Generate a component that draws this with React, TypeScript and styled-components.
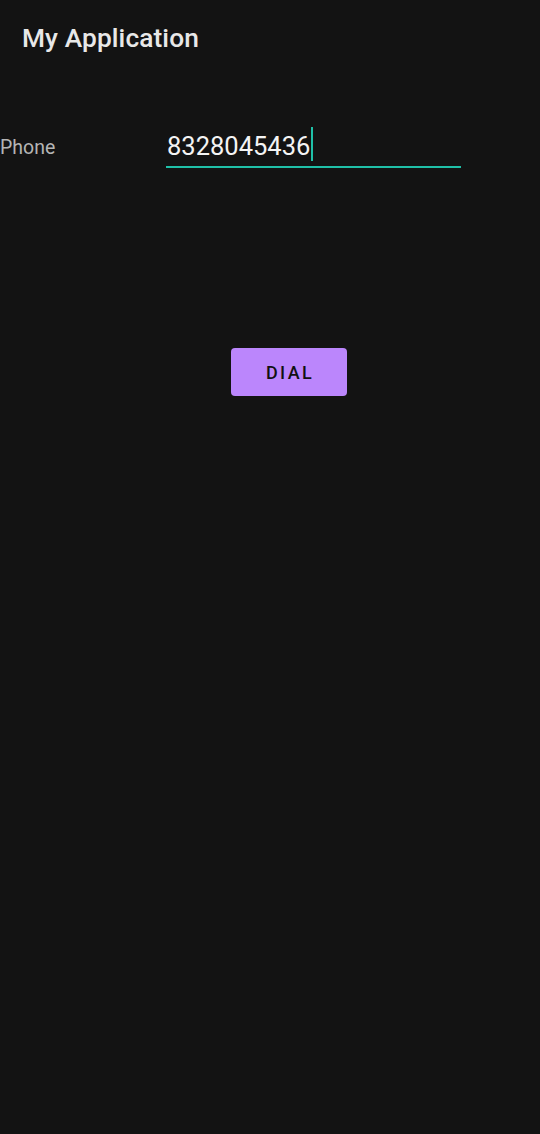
import React from "react";
import styled, { createGlobalStyle } from "styled-components";

const Global = createGlobalStyle`
  html, body { margin: 0; padding: 0; background: #131313; }
  body { font-family: Roboto, "Noto Sans", sans-serif; }
`;

const Screen = styled.div`
  width: 540px;
  height: 1134px;
  background: #131313;
  display: flex;
  flex-direction: column;
`;

const TopBar = styled.header`
  height: 76px;
  display: flex;
  align-items: center;
  padding-left: 22px;
  box-sizing: border-box;
`;

const Title = styled.h1`
  margin: 0;
  font-size: 26.3px;
  font-weight: 500;
  color: #e8e8e8;
  letter-spacing: 0.1px;
`;

const Row = styled.div`
  margin-top: 50px;
  display: flex;
  align-items: flex-start;
`;

const Label = styled.label`
  width: 166px;
  font-size: 19.5px;
  color: #b5b5b5;
  padding-top: 10px;
`;

const Field = styled.div`
  width: 295px;
  border-bottom: 2px solid #1fc0a8;
  height: 42px;
  display: flex;
  align-items: center;
  box-sizing: border-box;
  padding-left: 1px;
`;

const Value = styled.span`
  font-size: 25.5px;
  color: #f4f4f4;
  line-height: 1;
  margin-top: 2px;
`;

const Caret = styled.span`
  display: inline-block;
  width: 2px;
  height: 34px;
  background: #1fc0a8;
  margin-left: 1px;
  margin-top: -4px;
`;

const ButtonWrap = styled.div`
  margin-top: 180px;
  display: flex;
  padding-left: 231px;
`;

const DialButton = styled.button`
  width: 116px;
  height: 48px;
  border: none;
  border-radius: 4px;
  background: #bb86fc;
  color: #111;
  font-family: Roboto, sans-serif;
  font-size: 18px;
  font-weight: 500;
  letter-spacing: 2.3px;
  padding: 0 0 0 2px;
`;

export default function App() {
  return (
    <>
      <Global />
      <Screen>
        <TopBar>
          <Title>My Application</Title>
        </TopBar>
        <Row>
          <Label>Phone</Label>
          <Field>
            <Value>8328045436</Value>
            <Caret />
          </Field>
        </Row>
        <ButtonWrap>
          <DialButton>DIAL</DialButton>
        </ButtonWrap>
      </Screen>
    </>
  );
}
